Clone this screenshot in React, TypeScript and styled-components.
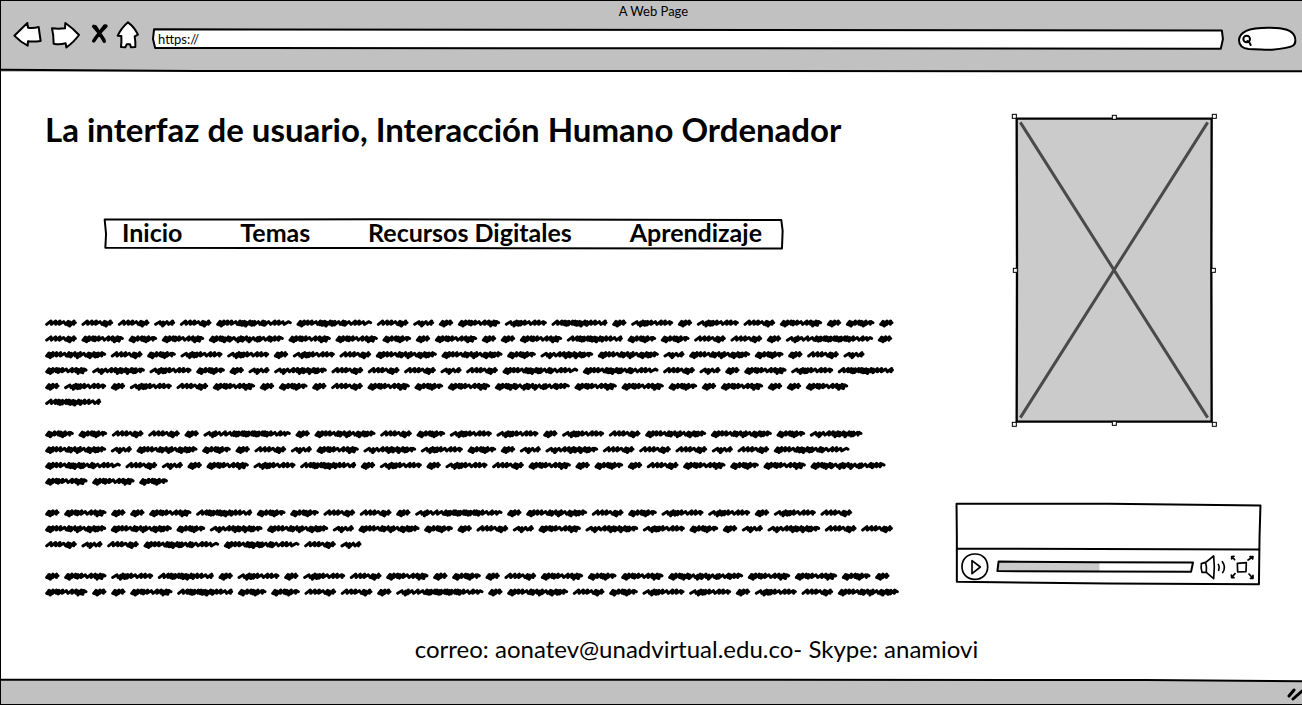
import React from 'react';
import styled, { createGlobalStyle } from 'styled-components';

const ink = '#000';
const chrome = '#c1c1c1';
const shade = '#cbcbcb';

const GlobalStyle = createGlobalStyle`
  *, *::before, *::after { box-sizing: border-box; }
  body {
    margin: 0;
    background: #fff;
    color: ${ink};
    font-family: Lato, 'Open Sans', sans-serif;
  }
`;

const Window = styled.div`
  display: flex;
  flex-direction: column;
  min-height: 100vh;
  border-left: 1px solid ${ink};
  overflow: hidden;
`;

const TopBar = styled.header`
  position: relative;
  height: 72px;
  background: ${chrome};
  border-top: 1px solid ${ink};
`;

const WindowTitle = styled.div`
  padding-left: 4px;
  font-size: 13px;
  line-height: 21px;
  text-align: center;
`;

const Toolbar = styled.div`
  display: flex;
  align-items: center;
  gap: 12px;
  height: 34px;
  padding: 0 4px 0 12px;
`;

const ToolGroup = styled.div`
  display: flex;
  gap: 8px;
  align-self: flex-start;
`;

const IconButton = styled.button<{ $width: number; $line?: number }>`
  width: ${(p) => p.$width}px;
  height: 28px;
  padding: 0;
  border: 0;
  background: none;
  flex: none;
  cursor: pointer;

  svg {
    display: block;
    width: 100%;
    height: 100%;
    overflow: visible;
    fill: #fff;
    stroke: ${ink};
    stroke-width: ${(p) => p.$line ?? 6};
    stroke-linejoin: round;
    stroke-linecap: round;
  }
`;

const FrameArt = styled.svg<{ $fill: string; $line: number }>`
  position: absolute;
  inset: 0;
  width: 100%;
  height: 100%;
  overflow: visible;
  pointer-events: none;
  fill: ${(p) => p.$fill};
  stroke: ${ink};
  stroke-width: ${(p) => p.$line};
  stroke-linejoin: round;
`;

const Framed = styled.div`
  position: relative;
`;

const AddressBox = styled(Framed)`
  flex: 1;
  height: 22px;
`;

const SearchBox = styled(Framed)`
  width: 62px;
  height: 28px;
`;

const Field = styled.input<{ $inset: number }>`
  position: relative;
  display: block;
  width: 100%;
  height: 100%;
  padding: 0 12px 0 ${(p) => p.$inset}px;
  border: 0;
  outline: 0;
  background: transparent;
  color: ${ink};
  font: inherit;
  font-size: 13px;
`;

const Main = styled.main`
  flex: 1;
  padding: 38px 40px 14px 44px;
`;

const Columns = styled.div`
  display: grid;
  grid-template-columns: minmax(0, 1fr) 307px;
  column-gap: 48px;
`;

const PageTitle = styled.h1`
  margin: 0;
  font-size: 33px;
  line-height: 38px;
  font-weight: 700;
`;

const Menu = styled.nav`
  position: relative;
  display: flex;
  justify-content: space-between;
  align-items: flex-start;
  max-width: 680px;
  height: 32px;
  margin: 70px 0 0 59px;
  padding: 0 22px 0 18px;
`;

const MenuLink = styled.a`
  position: relative;
  color: ${ink};
  font-size: 25px;
  line-height: 29px;
  font-weight: 700;
  text-decoration: none;
`;

const Scribble = styled.svg`
  display: block;
  width: 100%;
  max-width: 860px;
  height: auto;
  margin-top: 65px;
  overflow: visible;
  fill: none;
  stroke: ${ink};
  stroke-width: 9;
  stroke-linejoin: round;
  stroke-linecap: round;
`;

const Placeholder = styled.svg`
  display: block;
  width: 210px;
  height: 320px;
  margin-left: 55px;
`;

const Player = styled.section`
  position: relative;
  height: 83px;
  margin-top: 73px;
`;

const Screen = styled.div`
  height: 46px;
`;

const Controls = styled.div`
  position: relative;
  display: flex;
  align-items: center;
  height: 35px;
  padding: 0 6px;
`;

const Seek = styled(Framed)`
  flex: 1;
  height: 12px;
  margin: 0 6px 0 8px;
`;

const SeekInput = styled.input`
  position: relative;
  display: block;
  width: 100%;
  height: 100%;
  margin: 0;
  appearance: none;
  background: transparent;

  &::-webkit-slider-thumb {
    appearance: none;
    width: 1px;
    height: 1px;
  }
`;

const Contact = styled.p`
  margin: 34px 0 0;
  padding-left: 86px;
  font-size: 24px;
  line-height: 30px;
  text-align: center;
`;

const StatusBar = styled.footer`
  position: relative;
  display: flex;
  justify-content: flex-end;
  align-items: center;
  height: 26px;
  border-bottom: 1px solid ${ink};
`;

const Grip = styled.svg`
  position: relative;
  width: 15px;
  height: 14px;
  margin-top: 4px;
  stroke: ${ink};
  stroke-width: 3;
  stroke-linecap: round;
`;

function Frame({ d, fill = '#fff', line = 2 }: { d: string; fill?: string; line?: number }) {
  return (
    <FrameArt
      $fill={fill}
      $line={line}
      viewBox="0 0 100 100"
      preserveAspectRatio="none"
      aria-hidden="true"
    >
      <path d={d} vectorEffect="non-scaling-stroke" />
    </FrameArt>
  );
}

/* Each scribbled word: horizontal advance, and the pitch of its zigzag strokes.
   A small pitch makes a dense blot, a large one an open wave. */
type Word = { advance: number; pitches: number[] };

const words: Record<string, Word> = {
  a: { advance: 57, pitches: [5, 6, 6, 12] },
  b: { advance: 77, pitches: [15, 6, 18, 10] },
  c: { advance: 100, pitches: [5, 6, 12, 12, 6, 7, 6, 15] },
  d: { advance: 109, pitches: [14, 13, 11, 19, 6, 6, 12] },
  e: { advance: 141, pitches: [5, 6, 6, 12, 6, 11, 18, 12, 12, 6, 8, 6] },
  f: { advance: 140, pitches: [16, 7, 6, 7, 7, 12, 18, 12, 12, 15] },
  g: { advance: 182, pitches: [14, 12, 8, 6, 6, 12, 7, 6, 7, 6, 10, 7, 13, 12, 18, 11] },
  h: { advance: 172, pitches: [16, 7, 18, 12, 12, 6, 7, 6, 11, 6, 12, 6, 6, 15] },
  i: { advance: 197, pitches: [5, 6, 6, 12, 12, 18, 6, 7, 14, 6, 7, 18, 7, 6, 10, 6, 7, 12] },
  j: { advance: 241, pitches: [5, 6, 6, 12, 12, 18, 6, 7, 6, 6, 12, 6, 7, 18, 7, 6, 19, 12, 12, 16] },
  k: { advance: 239, pitches: [5, 6, 6, 12, 6, 7, 10, 6, 19, 6, 7, 6, 14, 6, 18, 7, 6, 18, 10, 6, 12, 11] },
  l: { advance: 276, pitches: [16, 7, 7, 18, 14, 18, 6, 7, 6, 11, 6, 7, 6, 12, 6, 7, 6, 12, 6, 7, 12, 18, 10, 15] },
};

const paragraphs = [
  [
    'dddbdjjdbaefgafafdeaca',
    'decekeecaeaaegccddala',
    'idcffafdiichibicadb',
    'ehfcabhdddbdjjdbaefg',
    'afafdeacadecekeecaeaae',
    'g',
  ],
  ['ccddalaidcffafdiich', 'ibicadbehfcabhdddbdj', 'jdbaefgafafdeacadecek', 'eec'],
  ['aeaaegccddalaidcffafd', 'iichibicadbehfcabhdd', 'dbdjjdb'],
  ['aefgafafdeacadecekeeca', 'eaaegccddalaidcffafdi'],
];

const denseLift = [5, 3, 6, 4];
const denseDrop = [6, 9, 5, 7];

function wordPath(word: Word, x: number, y: number) {
  let px = x + 4;
  let d = `M${px} ${y + 4}`;
  word.pitches.forEach((pitch, n) => {
    const dense = pitch < 9;
    const lift = dense ? denseLift[n % 4] : pitch > 14 ? 4 : 6;
    const drop = dense ? denseDrop[n % 4] : 4;
    d += `L${px + Math.min(pitch + 2, 13)} ${y - lift}`;
    px += pitch;
    d += `L${px} ${y + drop}`;
  });
  const end = x + word.advance - 19;
  return `${d}L${end - 5} ${y - 4}L${end} ${y - 1}`;
}

function ScribbledText() {
  let row = 0;
  return (
    <Scribble viewBox="0 0 2580 855" role="img" aria-label="Texto de relleno">
      {paragraphs.map((lines, p) => {
        const paths = lines.map((line) => {
          const y = 24 + (row * 807) / 17;
          row += 1;
          let x = 1;
          return Array.from(line)
            .map((code) => {
              const d = wordPath(words[code], x, y);
              x += words[code].advance;
              return d;
            })
            .join('');
        });
        row += 1;
        return <path key={p} d={paths.join('')} />;
      })}
    </Scribble>
  );
}

const handles = [
  [13, 19], [313, 22], [613, 19],
  [16, 481], [610, 481],
  [13, 943], [313, 940], [613, 943],
];

function ImagePlaceholder() {
  return (
    <Placeholder viewBox="0 0 630 960" role="img" aria-label="Imagen">
      <path d="M20 26H605L604 480L605 935H20L21 480Z" fill={shade} stroke={ink} strokeWidth="7" />
      <path d="M31 37L593 923M593 37L31 923" stroke="#4a4a4a" strokeWidth="9" />
      {handles.map(([x, y]) => (
        <rect
          key={`${x}-${y}`}
          x={x - 6}
          y={y - 6}
          width="12"
          height="12"
          fill="#fff"
          stroke={ink}
          strokeWidth="3"
        />
      ))}
    </Placeholder>
  );
}

const menu = ['Inicio', 'Temas', 'Recursos Digitales', 'Aprendizaje'];

export default function App() {
  return (
    <>
      <GlobalStyle />
      <Window>
        <TopBar>
          <Frame fill="none" d="M0 97L15 98.5L100 99" />
          <WindowTitle>A Web Page</WindowTitle>
          <Toolbar>
            <ToolGroup>
              <IconButton $width={30} aria-label="Atrás">
                <svg viewBox="0 0 90 84">
                  <path d="M4 41L43 3L45 17Q62 19 77 15Q80 38 83 57Q62 60 45 58L44 71Q22 60 4 41Z" />
                </svg>
              </IconButton>
              <IconButton $width={30} aria-label="Adelante">
                <svg viewBox="0 0 90 84">
                  <path d="M3 19Q22 21 42 19L43 3Q65 18 84 39Q66 63 46 76L44 64Q24 69 8 65Q8 40 3 19Z" />
                </svg>
              </IconButton>
              <IconButton $width={20} $line={10} aria-label="Detener">
                <svg viewBox="0 0 60 84">
                  <path
                    d="M14 13L31 33L46 58M51 12L31 33L14 57M19 14L31 33L45 54M47 12L31 33L17 52"
                    fill="none"
                  />
                </svg>
              </IconButton>
              <IconButton $width={24} aria-label="Inicio">
                <svg viewBox="0 0 72 84">
                  <path d="M33 1Q52 15 63 38L53 43Q56 60 55 75L42 76L39 67L29 67L25 76L12 75Q14 58 13 42L2 41Q14 17 33 1Z" />
                </svg>
              </IconButton>
            </ToolGroup>
            <AddressBox>
              <Frame d="M0.1 6L99.8 11L99.9 50L99.7 94L40 92L0.2 91L0 50Z" />
              <Field $inset={5} type="text" aria-label="Dirección" defaultValue="https://" />
            </AddressBox>
            <SearchBox>
              <FrameArt $fill="#fff" $line={6} viewBox="0 0 186 84" aria-hidden="true">
                <path d="M9 45C10 20 36 8 96 8C148 8 168 16 176 34C184 62 176 68 108 74C90 76 70 72 38 72C20 70 9 60 9 45Z" />
                <circle cx="32" cy="42" r="10" />
                <path d="M34 48L40 52L44 60" strokeLinecap="round" />
              </FrameArt>
              <Field $inset={20} type="search" aria-label="Buscar" />
            </SearchBox>
          </Toolbar>
        </TopBar>

        <Main>
          <Columns>
            <div>
              <PageTitle>La interfaz de usuario, Interacción Humano Ordenador</PageTitle>
              <Menu>
                <Frame d="M0.1 5L40 4L99.6 6L99.8 40L99.7 95L50 94L0.2 93L0.3 50Z" />
                {menu.map((item) => (
                  <MenuLink key={item} href="#">
                    {item}
                  </MenuLink>
                ))}
              </Menu>
              <ScribbledText />
            </div>
            <div>
              <ImagePlaceholder />
              <Player aria-label="Vídeo">
                <Frame d="M0.5 1L50 1L99.5 3L99.2 40L99 98L50 97L0.6 95L0.6 40Z" />
                <Frame fill="none" d="M0.6 55L99.2 56" />
                <Screen />
                <Controls>
                  <IconButton $width={28} $line={5} aria-label="Reproducir">
                    <svg viewBox="0 0 84 84">
                      <path d="M41 3C66 2 80 20 80 42C80 65 62 79 41 79C18 79 3 62 3 41C3 18 18 4 41 3Z" />
                      <path d="M33 23L58 42L33 62Z" />
                    </svg>
                  </IconButton>
                  <Seek>
                    <Frame line={0} fill={shade} d="M1 5H52V90H0Z" />
                    <Frame fill="none" d="M0.8 5L50 10L99.5 12L98.5 90L50 88L0.2 84Z" />
                    <SeekInput type="range" aria-label="Posición" min="0" max="100" defaultValue="52" />
                  </Seek>
                  <IconButton $width={28} $line={5} aria-label="Volumen">
                    <svg viewBox="0 0 84 84">
                      <path
                        d="M4 32L17 28L41 9Q45 42 41 77L19 58L6 58Q2 46 4 32ZM17 29Q21 43 19 57M55 34Q60 42 56 52M67 26Q79 42 68 59"
                        fill="none"
                      />
                    </svg>
                  </IconButton>
                  <IconButton $width={28} $line={5} aria-label="Pantalla completa">
                    <svg viewBox="0 0 84 84">
                      <path d="M28 31L55 29L54 56L29 57Z" />
                      <path
                        d="M20 20L12 12M11 18L11 11L18 10M60 21L74 12M66 11L75 11L74 18M21 62L11 73M10 66L11 74L18 74M63 63L75 76M75 67L75 76L67 76"
                        fill="none"
                      />
                    </svg>
                  </IconButton>
                </Controls>
              </Player>
            </div>
          </Columns>
          <Contact>correo: aonatev@unadvirtual.edu.co- Skype: anamiovi</Contact>
        </Main>

        <StatusBar>
          <Frame fill={chrome} d="M-1 3L60 3L88 4L101 9V104H-1Z" />
          <Grip viewBox="0 0 15 14" aria-hidden="true">
            <path d="M2 9L7 3M6 12L15 4" />
          </Grip>
        </StatusBar>
      </Window>
    </>
  );
}
